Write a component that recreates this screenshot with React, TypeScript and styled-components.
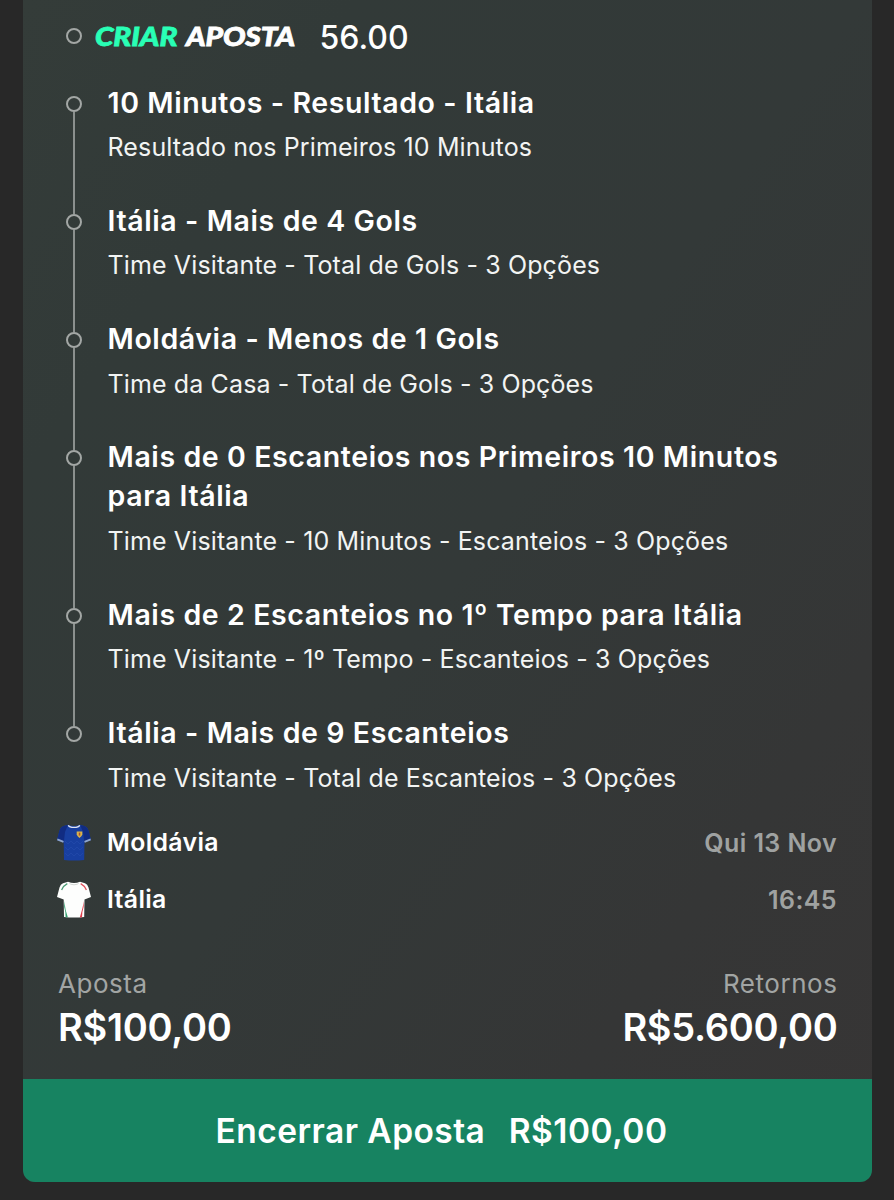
import React from 'react';
import styled, { createGlobalStyle } from 'styled-components';

const GlobalStyle = createGlobalStyle`
  * { box-sizing: border-box; }
  html { background: #282828; }
  body {
    margin: 0;
    background: #282828;
    color: #fff;
    font-family: Inter, "Liberation Sans", sans-serif;
    font-feature-settings: "calt" 0;
    -webkit-font-smoothing: antialiased;
  }
`;

const Page = styled.main`
  width: 894px;
  height: 1200px;
  padding: 0 22px 18px 23px;
  overflow: hidden;
`;

const Card = styled.article`
  display: flex;
  flex-direction: column;
  height: 1182px;
  border-radius: 0 0 12px 12px;
  overflow: hidden;
  background: linear-gradient(125deg, #343c39 0%, #323a38 20%, #333938 50%, #353636 78%, #373535 100%);
`;

const BuilderHeader = styled.header`
  display: flex;
  align-items: center;
  height: 74px;
  padding-left: 42.5px;
`;

const Dot = styled.span`
  flex: none;
  width: 16px;
  height: 16px;
  border: 2.4px solid #a3a7a5;
  border-radius: 50%;
`;

const HeaderDot = styled(Dot)`
  margin-bottom: 2px;
`;

const BrandMark = styled.span`
  display: block;
  margin: 0 0 2px 13px;
  width: 203px;
  white-space: nowrap;
  font: italic 900 27.4px/34px Lato, sans-serif;
  letter-spacing: -0.1px;
  word-spacing: 3px;
  -webkit-text-stroke: 0.8px currentColor;
  transform: scaleX(1.09);
  transform-origin: left center;
`;

const Accent = styled.span`
  color: #29ffb5;
`;

const Odds = styled.span`
  margin-left: 22px;
  padding-top: 2px;
  font-size: 32px;
  font-weight: 500;
  line-height: 38px;
`;

const Legs = styled.ol`
  list-style: none;
  margin: 0;
  padding: 8.6px 35px 0 42.5px;
`;

const Leg = styled.li`
  display: flex;
  gap: 26px;
`;

const Rail = styled.div`
  flex: none;
  width: 16px;
  display: flex;
  flex-direction: column;
  align-items: center;
  padding-top: 13px;
`;

const Connector = styled.span`
  flex: 1;
  width: 2px;
  margin-bottom: -13px;
  background: #8b908e;
`;

const LegText = styled.div`
  padding-bottom: 36.8px;
`;

const Selection = styled.h2`
  margin: 0 0 8.5px;
  font-size: 28.5px;
  font-weight: 600;
  line-height: 39px;
  letter-spacing: 0.6px;
  white-space: pre-line;
`;

const Market = styled.p`
  margin: 0;
  font-size: 25px;
  font-weight: 400;
  line-height: 34px;
  letter-spacing: 0.13px;
  color: #f2f4f3;
`;

const Fixture = styled.section`
  display: flex;
  flex-direction: column;
  padding: 0 35px 0 34px;
  margin-top: -17px;
`;

const TeamRow = styled.div`
  display: flex;
  align-items: center;
  height: 57px;
`;

const TeamName = styled.span`
  margin-left: 16px;
  padding-bottom: 2px;
  font-size: 24.8px;
  font-weight: 600;
  letter-spacing: 0.35px;
`;

const Kickoff = styled.time`
  margin-left: auto;
  font-size: 25px;
  font-weight: 600;
  letter-spacing: 0.4px;
  color: #9fa2a1;
`;

const Totals = styled.section`
  display: flex;
  justify-content: space-between;
  padding: 38.7px 34.5px 0 35px;
`;

const Total = styled.div<{ $end?: boolean }>`
  text-align: ${(p) => (p.$end ? 'right' : 'left')};
`;

const TotalLabel = styled.div`
  font-size: 26px;
  line-height: 34px;
  letter-spacing: 0.55px;
  color: #a2a5a4;
`;

const TotalValue = styled.div`
  margin-top: 3.3px;
  font-size: 38px;
  font-weight: 600;
  line-height: 46px;
  letter-spacing: -0.3px;
`;

const CashOut = styled.button`
  display: flex;
  justify-content: center;
  align-items: center;
  gap: 23.5px;
  flex: none;
  height: 103px;
  margin-top: auto;
  padding: 1px 12px 0 0;
  border: 0;
  background: #178361;
  color: #fff;
  font: 600 33.5px/40px Inter, "Liberation Sans", sans-serif;
  letter-spacing: 0.45px;
`;

const legs = [
  ['10 Minutos - Resultado - Itália', 'Resultado nos Primeiros 10 Minutos'],
  ['Itália - Mais de 4 Gols', 'Time Visitante - Total de Gols - 3 Opções'],
  ['Moldávia - Menos de 1 Gols', 'Time da Casa - Total de Gols - 3 Opções'],
  ['Mais de 0 Escanteios nos Primeiros 10 Minutos\npara Itália', 'Time Visitante - 10 Minutos - Escanteios - 3 Opções'],
  ['Mais de 2 Escanteios no 1º Tempo para Itália', 'Time Visitante - 1º Tempo - Escanteios - 3 Opções'],
  ['Itália - Mais de 9 Escanteios', 'Time Visitante - Total de Escanteios - 3 Opções'],
];

const SHIRT = 'M11 .8 Q17 3.2 23 .8 L28 2.3 Q30.5 3.2 31.5 6.5 L34 16 L27.5 18.5 L27.2 36 Q17 37.2 7 36 L6.7 18.5 L0 16 L2.5 6.5 Q3.5 3.2 6 2.3Z';

const MoldovaShirt = () => (
  <svg width="34" height="38" viewBox="0 0 34 38">
    <path d={SHIRT} fill="#183fa0" />
    <path d="M6 2.3 11 .8 8 8 6.8 18.5 0 16 2.5 6.5Q3.5 3.2 6 2.3ZM28 2.3 23 .8 26 8 27.4 18.5 34 16 31.5 6.5Q30.5 3.2 28 2.3Z" fill="#112c82" />
    <path d="M8 17l3 3 3-3 3 3 3-3 3 3 3-3M8 23l3 3 3-3 3 3 3-3 3 3 3-3M8 29l3 3 3-3 3 3 3-3 3 3 3-3" fill="none" stroke="#2349a9" strokeWidth=".8" />
    <path d="M11.3 1.2Q12.3 3.4 17 3.4T22.7 1.2" fill="none" stroke="#dfe5f2" strokeWidth="1.4" />
    <path d="M.3 15.4 6.5 17.9M33.7 15.4 27.5 17.9" stroke="#8fa6cc" strokeWidth="1.8" />
    <path d="M19.7 7.5h5.6v2.8q-.4 2.5-2.8 3.6-2.4-1.1-2.8-3.6Z" fill="#dcb44a" />
    <path d="M21.8 8.6h1.5v3h-1.5z" fill="#a9542f" />
  </svg>
);

const ItalyShirt = () => (
  <svg width="34" height="38" viewBox="0 0 34 38">
    <path d={SHIRT} fill="#fdfefd" />
    <path d="M12 1.6Q13 3.8 17 3.8T22 1.6" fill="none" stroke="#d3d8d5" strokeWidth="1" />
    <path d="M10.3 2.6Q6.5 4.5 4.6 9" fill="none" stroke="#4c9c76" strokeWidth="1.3" />
    <path d="M23.7 2.6Q27.5 4.5 29.4 9" fill="none" stroke="#e0505b" strokeWidth="1.3" />
    <path d="M7.2 20Q8.2 29 10.8 36.3L8.6 36.2Q8.6 30 7.2 26Z" fill="#35a071" />
    <path d="M27 20Q25.5 28 22.8 36.5L25 36.3Q25.2 30 26.6 26Z" fill="#e03c4b" />
  </svg>
);

export default function App() {
  return (
    <>
      <GlobalStyle />
      <Page>
        <Card>
          <BuilderHeader>
            <HeaderDot />
            <BrandMark><Accent>CRIAR</Accent> APOSTA</BrandMark>
            <Odds>56.00</Odds>
          </BuilderHeader>
          <Legs>
            {legs.map(([selection, market], i) => (
              <Leg key={selection}>
                <Rail>
                  <Dot />
                  {i < legs.length - 1 && <Connector />}
                </Rail>
                <LegText>
                  <Selection>{selection}</Selection>
                  <Market>{market}</Market>
                </LegText>
              </Leg>
            ))}
          </Legs>
          <Fixture>
            <TeamRow>
              <MoldovaShirt />
              <TeamName>Moldávia</TeamName>
              <Kickoff>Qui 13 Nov</Kickoff>
            </TeamRow>
            <TeamRow>
              <ItalyShirt />
              <TeamName>Itália</TeamName>
              <Kickoff>16:45</Kickoff>
            </TeamRow>
          </Fixture>
          <Totals>
            <Total>
              <TotalLabel>Aposta</TotalLabel>
              <TotalValue>R$100,00</TotalValue>
            </Total>
            <Total $end>
              <TotalLabel>Retornos</TotalLabel>
              <TotalValue>R$5.600,00</TotalValue>
            </Total>
          </Totals>
          <CashOut>
            <span>Encerrar Aposta</span>
            <span>R$100,00</span>
          </CashOut>
        </Card>
      </Page>
    </>
  );
}
